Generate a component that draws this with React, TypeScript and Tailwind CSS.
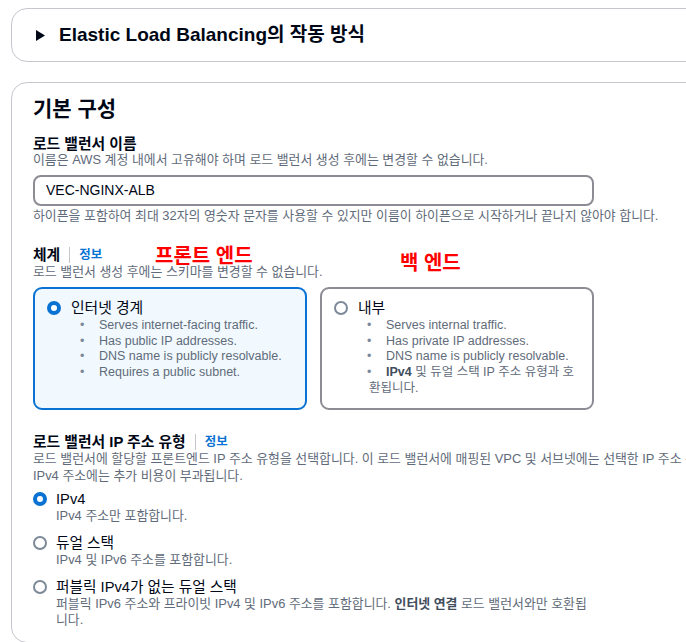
import React from 'react';

const FONT = "font-['Liberation_Sans','Noto_Sans_CJK_KR',sans-serif]";

const Radio: React.FC<{ checked?: boolean }> = ({ checked }) => (
  <span
    className={`inline-block shrink-0 w-[14px] h-[14px] rounded-full bg-white ${
      checked ? 'border-[4px] border-[#0972d3]' : 'border-2 border-[#7d8998]'
    }`}
  />
);

const Bullet: React.FC<{ children: React.ReactNode }> = ({ children }) => (
  <li>
    <span className="inline-block -ml-[2px] w-[19px] text-[#7d8998]">•</span>
    {children}
  </li>
);

const InfoLabel: React.FC<{ label: string }> = ({ label }) => (
  <div className="flex items-center h-[18px]">
    <span className="text-[14.8px] font-bold text-[#000716]">{label}</span>
    <span className="mx-[9px] w-px h-[16px] bg-[#c6c6cd]" />
    <span className="text-[12.5px] font-bold text-[#0972d3]">정보</span>
  </div>
);

const SchemeCard: React.FC<{
  checked?: boolean;
  label: string;
  children: React.ReactNode;
}> = ({ checked, label, children }) => (
  <div
    className={`h-[123px] rounded-[9px] border-2 px-[12px] pt-[10px] ${
      checked ? 'border-[#0972d3] bg-[#f1f9fe]' : 'border-[#8c8c94] bg-white'
    }`}
  >
    <div className="flex items-center gap-[10px] h-[18px]">
      <Radio checked={checked} />
      <span className="text-[14.8px] text-[#000716]">{label}</span>
    </div>
    <ul className="mt-[1px] pl-[35px] text-[12.5px] leading-[15.7px] text-[#5f6b7a]">{children}</ul>
  </div>
);

const IpOption: React.FC<{ checked?: boolean; label: string; desc: React.ReactNode; className?: string }> = ({
  checked,
  label,
  desc,
  className,
}) => (
  <div className={className}>
    <div className="flex items-center gap-[9px] h-[18px]">
      <Radio checked={checked} />
      <span className="text-[14.7px] text-[#000716]">{label}</span>
    </div>
    <p className="pl-[23px] w-[555px] text-[12.9px] leading-[16px] text-[#5f6b7a]">{desc}</p>
  </div>
);

export default function App() {
  return (
    <div className={`w-[686px] h-[642px] overflow-hidden bg-white ${FONT}`}>
      <div className="w-[780px] pl-[11px] pt-[8px]">
        {/* collapsed help section */}
        <div className="h-[54px] rounded-2xl border border-[#c6c6cd] flex items-center pl-[24px] gap-[14px]">
          <svg width="9" height="11" viewBox="0 0 9 11">
            <polygon points="0,0 9,5.5 0,11" fill="#000716" />
          </svg>
          <span className="text-[19px] font-bold text-[#000716]">Elastic Load Balancing의 작동 방식</span>
        </div>

        {/* basic config */}
        <div className="relative mt-[20px] rounded-2xl border border-[#c6c6cd] pl-[21px] pt-[14px] pb-[14px]">
          <h2 className="text-[21px] leading-[24px] font-bold text-[#000716]">기본 구성</h2>

          <div className="mt-[15px] text-[14.8px] leading-[16px] font-bold text-[#000716]">로드 밸런서 이름</div>
          <div className="text-[12.9px] leading-[16px] text-[#5f6b7a]">
            이름은 AWS 계정 내에서 고유해야 하며 로드 밸런서 생성 후에는 변경할 수 없습니다.
          </div>
          <div className="mt-[7px] w-[561px] h-[31px] rounded-[8px] border-2 border-[#8c8c94] flex items-center pl-[11px] text-[14px] text-[#000716]">
            VEC-NGINX-ALB
          </div>
          <div className="mt-[2px] text-[12.9px] leading-[16px] text-[#5f6b7a] whitespace-nowrap">
            하이픈을 포함하여 최대 32자의 영숫자 문자를 사용할 수 있지만 이름이 하이픈으로 시작하거나 끝나지 않아야 합니다.
          </div>

          <div className="mt-[22px]">
            <InfoLabel label="체계" />
          </div>
          <div className="text-[12.9px] leading-[16px] text-[#5f6b7a]">로드 밸런서 생성 후에는 스키마를 변경할 수 없습니다.</div>

          <span className="absolute left-[143px] top-[162px] text-[20px] leading-[22px] font-bold text-[#ff0000]">프론트 엔드</span>
          <span className="absolute left-[388px] top-[169px] text-[20px] leading-[22px] font-bold text-[#ff0000]">백 엔드</span>

          <div className="mt-[7px] w-[561px] grid grid-cols-2 gap-[13px]">
            <SchemeCard checked label="인터넷 경계">
              <Bullet>Serves internet-facing traffic.</Bullet>
              <Bullet>Has public IP addresses.</Bullet>
              <Bullet>DNS name is publicly resolvable.</Bullet>
              <Bullet>Requires a public subnet.</Bullet>
            </SchemeCard>
            <SchemeCard label="내부">
              <Bullet>Serves internal traffic.</Bullet>
              <Bullet>Has private IP addresses.</Bullet>
              <Bullet>DNS name is publicly resolvable.</Bullet>
              <Bullet>
                <b className="text-[#414d5c]">IPv4</b> 및 듀얼 스택 IP 주소 유형과 호환됩니다.
              </Bullet>
            </SchemeCard>
          </div>

          <div className="mt-[23px]">
            <InfoLabel label="로드 밸런서 IP 주소 유형" />
          </div>
          <div className="text-[12.9px] leading-[16.5px] text-[#5f6b7a]">
            <div className="whitespace-nowrap">
              로드 밸런서에 할당할 프론트엔드 IP 주소 유형을 선택합니다. 이 로드 밸런서에 매핑된 VPC 및 서브넷에는 선택한 IP 주소 유형이 포함되어야 합니다. 퍼블릭
            </div>
            <div className="whitespace-nowrap">IPv4 주소에는 추가 비용이 부과됩니다.</div>
          </div>

          <IpOption className="mt-[6px]" checked label="IPv4" desc="IPv4 주소만 포함합니다." />
          <IpOption className="mt-[10px]" label="듀얼 스택" desc="IPv4 및 IPv6 주소를 포함합니다." />
          <IpOption
            className="mt-[10px]"
            label="퍼블릭 IPv4가 없는 듀얼 스택"
            desc={
              <>
                퍼블릭 IPv6 주소와 프라이빗 IPv4 및 IPv6 주소를 포함합니다. <b className="text-[#414d5c]">인터넷 연결</b> 로드 밸런서와만 호환됩니다.
              </>
            }
          />
        </div>
      </div>
    </div>
  );
}
